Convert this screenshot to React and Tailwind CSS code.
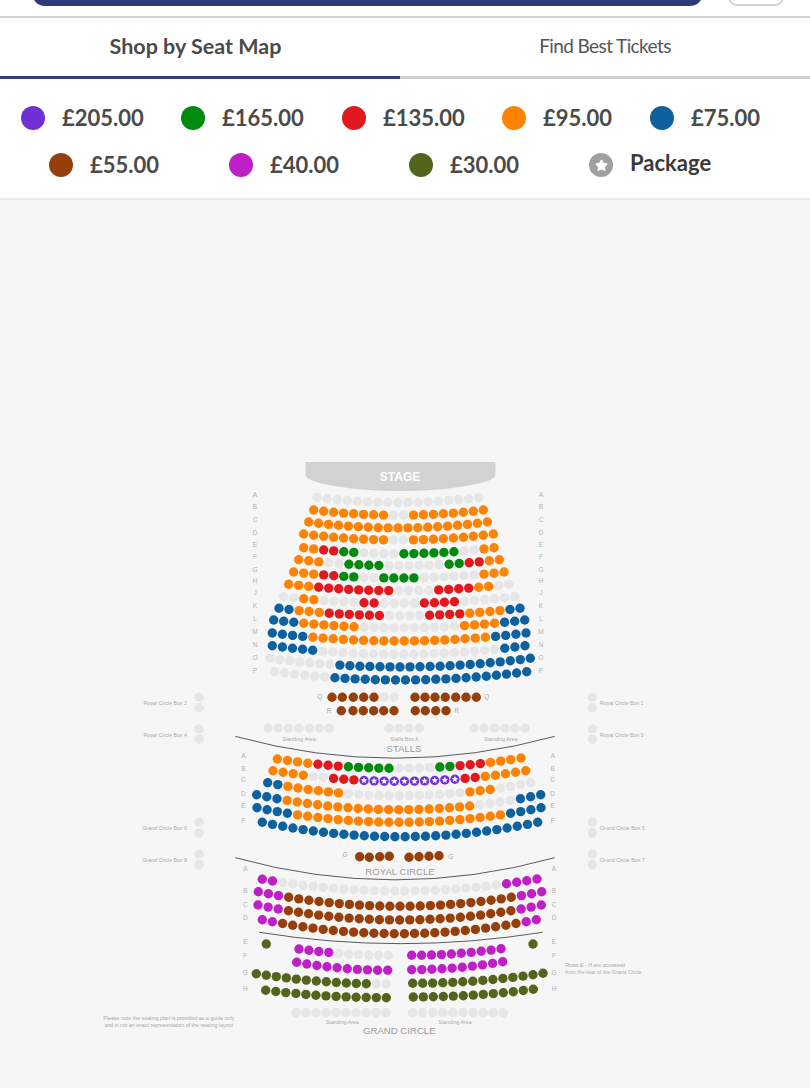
import { Star } from 'lucide-react';

const seatColors = {
  o: '#ff8200',
  g: '#008a0e',
  r: '#e2181f',
  b: '#0d619e',
  n: '#973f0a',
  m: '#bf1fc6',
  l: '#53651c',
  p: '#7030d8',
  x: '#e6e6e6',
};

const prices = [
  ['#7030d8', '£205.00'],
  ['#008a0e', '£165.00'],
  ['#e2181f', '£135.00'],
  ['#ff8200', '£95.00'],
  ['#0d619e', '£75.00'],
];

const prices2 = [
  ['#973f0a', '£55.00'],
  ['#bf1fc6', '£40.00'],
  ['#53651c', '£30.00'],
];

// x0, y0, x1, y1, lowest y, colour runs
const curved = [
  // stalls front block
  [317, 497.5, 478.7, 497.5, 502.5, 'x17'],
  [313.7, 510, 483.3, 510, 515.3, 'o8 x2 o8'],
  [308.7, 522, 487.3, 522, 528, 'o19'],
  [303.7, 534, 493.3, 534, 540, 'o9 x2 o9'],
  [303.7, 547.7, 494, 547.7, 553.7, 'o2 r2 g2 x4 g6 x2 o2'],
  [298.7, 559.7, 499.3, 559.7, 565.7, 'o3 x2 g4 x6 g2 r2 o2'],
  [293.7, 572, 504, 572, 578, 'o3 r2 g2 x2 g4 x6 o3'],
  [288.7, 584.3, 508.7, 584.3, 590.7, 'o3 r8 x4 r4 o2 x2'],
  [283.7, 596.7, 514.7, 596.7, 603.3, 'x2 o2 x4 r2 x4 r4 x6'],
  [279, 608.3, 520, 608.3, 615.7, 'b2 o3 r6 x4 r4 o4 b2'],
  [273.7, 620, 524.7, 620, 627.7, 'b3 o6 x10 o4 b3'],
  [272.3, 633, 526, 633, 641, 'b4 o18 b4'],
  [272.3, 645.7, 525, 645.7, 654.3, 'b5 x18 b3'],
  [269.7, 658.3, 530.3, 658.3, 667, 'x7 b20'],
  [274.3, 671.7, 526.7, 671.7, 680, 'x6 b20'],
  // stalls rear block
  [277.3, 759, 521, 758, 768.3, 'o4 r3 g5 x4 g2 r3 o4'],
  [273, 770.7, 525.7, 770.7, 781.3, 'o4 x2 r3 p10 r2 o5'],
  [267.7, 782.7, 530.7, 782.7, 795.7, 'b2 o6 x12 o3 x4'],
  [256.7, 794.7, 540.7, 794.7, 809.7, 'b3 o19 x4 b3'],
  [257, 807.7, 541, 807.7, 822.3, 'b4 o21 b4'],
  [262.3, 822.3, 537.7, 822.3, 836.7, 'b28'],
  // royal circle
  [262.3, 879.3, 537, 879, 891, 'm2 x22 m4'],
  [258.3, 891.7, 541.7, 891.7, 906.3, 'm3 n23 m3'],
  [258, 905, 541.3, 905, 920, 'm3 n23 m3'],
  [262.3, 919.7, 536.3, 919.7, 933.7, 'm2 n24 m2'],
];

// grand circle halves, lowest point at the aisle; flip = colours listed from the outer end
const halves = [
  [388.3, 955.3, 299, 949, 'm4 x6', true],
  [387.7, 970.3, 296.7, 962.3, 'm10', true],
  [386.3, 984, 256.3, 973.7, 'l12 x2', true],
  [386.3, 997.7, 265.7, 990.3, 'l13', true],
  [411.7, 955.3, 501, 948.7, 'm10'],
  [411.7, 969.7, 502.7, 961.7, 'm10'],
  [412.7, 983.3, 543, 973.3, 'l14'],
  [413.3, 997, 533.3, 989.3, 'l13'],
];

const spread = (runs) =>
  runs.split(' ').flatMap((run) => Array(Number(run.slice(1))).fill(run[0]));

const seats = [];
curved.forEach(([x0, y0, x1, y1, low, runs]) => {
  const list = spread(runs);
  list.forEach((kind, i) => {
    const t = i / (list.length - 1);
    const base = y0 + (y1 - y0) * t;
    const y = base + (low - (y0 + y1) / 2) * (1 - (2 * t - 1) ** 2);
    seats.push([x0 + (x1 - x0) * t, y, kind]);
  });
});
halves.forEach(([x0, y0, x1, y1, runs, flip]) => {
  const list = spread(runs);
  list.forEach((kind, i) => {
    const t = flip ? 1 - i / (list.length - 1) : i / (list.length - 1);
    seats.push([x0 + (x1 - x0) * t, y0 + (y1 - y0) * t * t, kind]);
  });
});

const place = (xs, y, kind) => xs.forEach((x) => seats.push([x, y, kind]));
place([332, 342.3, 353.3, 363.7, 374], 697.3, 'n');
place([384, 394], 697.3, 'x');
place([415, 425, 435, 445.3, 455.7, 466, 476.3], 697.3, 'n');
place([341.3, 353, 363.3, 373.7, 383.7, 394, 415.3, 425.3, 435.7, 446], 710.7, 'n');
place([268.3, 278.3, 288.7, 299, 309.3, 319.3, 329.3], 728.3, 'x');
place([389, 399, 409, 419.3], 728.3, 'x');
place([474, 484.3, 494.7, 505, 515, 525], 728.3, 'x');
place([296, 306, 316, 326, 336, 346, 356, 366, 376, 386], 1012.7, 'x');
place([412.7, 422.7, 432.8, 442.8, 452.9, 463, 473, 483.1, 493.2, 503.3], 1012.7, 'x');
place([266.3, 533], 944, 'l');
[[359.7, 856.7], [369.3, 857.2], [379.7, 856.7], [389.3, 856.2]].forEach(([x, y]) => seats.push([x, y, 'n']));
[[409, 857.3], [419, 856.7], [429, 856.3], [439, 855.7]].forEach(([x, y]) => seats.push([x, y, 'n']));
[199, 592.3].forEach((x) => {
  [697.3, 707.7, 729, 739.3, 822.3, 833, 854.3, 864.7].forEach((y) => seats.push([x, y, 'x']));
});

const rowLabels = [
  ['A', 495, 'B', 506.7, 'C', 520, 'D', 533, 'E', 544.7, 'F', 557, 'G', 569.7, 'H', 580.7, 'J', 592.3, 'K', 605.7, 'L', 618.3, 'M', 631.7, 'N', 644.3, 'O', 657.7, 'P', 671],
  ['A', 755.7, 'B', 768.3, 'C', 779.7, 'D', 793.3, 'E', 805.3, 'F', 820.7],
  ['A', 868.3, 'B', 890.7, 'C', 904.3, 'D', 917.3, 'E', 941.3, 'F', 956, 'G', 972.3, 'H', 988.3],
];
const labelX = [[255, 541], [243.3, 552.7], [245.3, 554]];

const small = [
  ['Royal Circle Box 2', 187, 702.7, 'end'],
  ['Royal Circle Box 4', 187, 734.7, 'end'],
  ['Grand Circle Box 6', 187, 827.7, 'end'],
  ['Grand Circle Box 8', 187, 859.7, 'end'],
  ['Royal Circle Box 1', 600, 702.7, 'start'],
  ['Royal Circle Box 3', 600, 734.7, 'start'],
  ['Grand Circle Box 5', 600, 827.7, 'start'],
  ['Grand Circle Box 7', 600, 859.7, 'start'],
  ['Standing Area', 299, 738.7, 'middle'],
  ['Stalls Box A', 404.5, 738.7, 'middle'],
  ['Standing Area', 500.7, 738.7, 'middle'],
  ['Standing Area', 342.3, 1021.7, 'middle'],
  ['Standing Area', 455, 1021.7, 'middle'],
  ['Please note the seating plan is provided as a guide only', 168.8, 1017.7, 'middle'],
  ['and is not an exact representation of the seating layout', 168.8, 1025, 'middle'],
  ['Rows E - H are accessed', 565.3, 964.7, 'start'],
  ['from the rear of the Grand Circle', 565.3, 972, 'start'],
];

const starPoints = (cx, cy, r) =>
  Array.from({ length: 10 }, (_, i) => {
    const radius = i % 2 ? r * 0.45 : r;
    const angle = (Math.PI / 5) * i - Math.PI / 2;
    return `${(cx + radius * Math.cos(angle)).toFixed(2)},${(cy + radius * Math.sin(angle)).toFixed(2)}`;
  }).join(' ');

function Price({ color, label }) {
  return (
    <div className="flex items-center gap-[17px]">
      <span className="h-6 w-6 shrink-0 rounded-full" style={{ backgroundColor: color }} />
      <span className="text-[22px] leading-6 font-bold text-[#4a4a4a]">{label}</span>
    </div>
  );
}

function SeatMap() {
  return (
    <svg viewBox="0 200 810 888" className="block h-[888px] w-[810px] [font-family:'Liberation_Sans',Arial,sans-serif]">
      <path d="M305.5 462H495.5V475C495.5 483 450 491 400 491C350 491 305.5 483 305.5 475Z" fill="#d2d2d2" />
      <text x="400" y="481" textAnchor="middle" fontSize="12" fontWeight="700" fill="#fff">STAGE</text>

      <path d="M235.3 736.4Q395 780 554.7 736.4" fill="none" stroke="#5a5a5a" strokeWidth="1" />
      <path d="M235.3 857.7Q395 902 554.7 857.7" fill="none" stroke="#5a5a5a" strokeWidth="1" />
      <path d="M259.3 932.3Q400 955 542.7 932.3" fill="none" stroke="#5a5a5a" strokeWidth="1" />

      {seats.map(([x, y, kind], i) => (
        <circle key={i} cx={x.toFixed(1)} cy={y.toFixed(1)} r="4.7" fill={seatColors[kind]} />
      ))}
      {seats.filter((s) => s[2] === 'p').map(([x, y], i) => (
        <polygon key={i} points={starPoints(x, y, 3.4)} fill="#fff" />
      ))}

      {rowLabels.map((list, block) =>
        list.map((item, i) =>
          i % 2 === 0 ? (
            <g key={`${block}-${i}`} fontSize="6.5" fill="#b0b0b0" textAnchor="middle">
              <text x={labelX[block][0]} y={list[i + 1] + 2.3}>{item}</text>
              <text x={labelX[block][1]} y={list[i + 1] + 2.3}>{item}</text>
            </g>
          ) : null
        )
      )}

      <g fontSize="6.5" fill="#aaa" textAnchor="middle">
        <text x="319.7" y="699.3">Q</text>
        <text x="486.7" y="699.3">Q</text>
        <text x="329" y="712.7">R</text>
        <text x="456.7" y="712.7">R</text>
        <text x="345" y="856.6">G</text>
        <text x="450.7" y="858.6">G</text>
      </g>

      {small.map(([text, x, y, anchor], i) => (
        <text key={i} x={x} y={y + 1.8} fontSize="5.3" fill="#a8a8a8" textAnchor={anchor}>{text}</text>
      ))}

      <g fontSize="9.6" fill="#9a9a9a" textAnchor="middle">
        <text x="404" y="751.8">STALLS</text>
        <text x="400" y="874.5">ROYAL CIRCLE</text>
        <text x="399.3" y="1033.8">GRAND CIRCLE</text>
      </g>
    </svg>
  );
}

export default function App() {
  return (
    <div className="h-[1088px] w-[810px] overflow-hidden bg-[#f6f6f6] [font-family:Lato,sans-serif]">
      <div className="flex h-[16px] items-end overflow-hidden bg-white pr-[26px] pb-[10.5px] pl-[32px]">
        <div className="h-[26px] w-[671px] shrink-0 rounded-[20px] bg-[#2f3b78]" />
        <div className="ml-[25px] h-[26px] w-[56px] shrink-0 rounded-[9px] border-2 border-[#d0d0d0] bg-white" />
      </div>
      <div className="h-[2px] bg-[#d4d4d4]" />

      <div className="flex h-[58px] bg-white pb-[2px]">
        <div className="flex w-[400px] items-center justify-center pr-[9px] text-[21.5px] font-bold text-[#4a4a4a]">Shop by Seat Map</div>
        <div className="flex w-[410px] items-center justify-center text-[19px] font-normal tracking-[-0.6px] text-[#555]">Find Best Tickets</div>
      </div>
      <div className="flex h-[3px]">
        <div className="w-[400px] bg-[#323f7c]" />
        <div className="w-[410px] bg-[#cfcfcf]" />
      </div>

      <div className="h-[121px] border-b-2 border-[#e9e9e9] bg-white pt-[27px]">
        <div className="grid grid-cols-[160px_161px_160px_148px_auto] pl-[21px]">
          {prices.map(([color, label]) => (
            <Price key={label} color={color} label={label} />
          ))}
        </div>
        <div className="mt-[23px] grid grid-cols-[180px_180px_180px_auto] pl-[49px]">
          {prices2.map(([color, label]) => (
            <Price key={label} color={color} label={label} />
          ))}
          <div className="flex items-center gap-[17px]">
            <span className="flex h-6 w-6 shrink-0 items-center justify-center rounded-full bg-[#a0a0a0]">
              <Star size={13} fill="#fff" stroke="#fff" />
            </span>
            <span className="-mt-1 text-[22px] leading-6 font-bold text-[#3a3a3a]">Package</span>
          </div>
        </div>
      </div>

      <SeatMap />
    </div>
  );
}
